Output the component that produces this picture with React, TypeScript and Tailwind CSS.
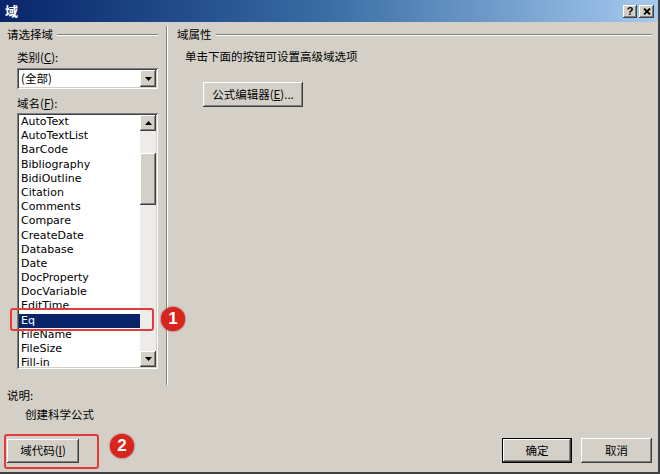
import React from 'react';

const raised =
  'bg-[#d4d0c8] shadow-[inset_-1px_-1px_#404040,inset_1px_1px_#ffffff,inset_-2px_-2px_#808080,inset_2px_2px_#d4d0c8]';
const sunken =
  'shadow-[inset_1px_1px_#808080,inset_-1px_-1px_#ffffff,inset_2px_2px_#404040,inset_-2px_-2px_#d4d0c8]';

const fields = [
  'AutoText',
  'AutoTextList',
  'BarCode',
  'Bibliography',
  'BidiOutline',
  'Citation',
  'Comments',
  'Compare',
  'CreateDate',
  'Database',
  'Date',
  'DocProperty',
  'DocVariable',
  'EditTime',
  'Eq',
  'FileName',
  'FileSize',
  'Fill-in',
];

function Arrow({ up }: { up?: boolean }) {
  return (
    <svg width="7" height="4" viewBox="0 0 7 4">
      <path d={up ? 'M3.5 0 L7 4 L0 4 Z' : 'M0 0 L7 0 L3.5 4 Z'} fill="#000" />
    </svg>
  );
}

function GroupTitle({ label }: { label: string }) {
  return (
    <div className="flex items-center h-[14px]">
      <span>{label}</span>
      <div className="flex-1 ml-[4px] h-[2px] border-t border-b border-t-[#808080] border-b-white" />
    </div>
  );
}

function Badge({ n, className }: { n: string; className: string }) {
  return (
    <div
      className={`absolute w-[24px] h-[24px] rounded-full bg-[#d8261e] text-white flex items-center justify-center font-bold text-[17px] font-['Liberation_Sans',sans-serif] shadow-[0_0_2px_#a01010] ${className}`}
    >
      {n}
    </div>
  );
}

export default function App() {
  return (
    <div className="relative w-[660px] h-[474px] bg-[#d4d0c8] overflow-hidden flex flex-col text-[11.5px] text-black font-['Noto_Sans_CJK_SC',sans-serif] border-r-2 border-b-2 border-r-[#404040] border-b-[#404040]">
      {/* title bar */}
      <div className="h-[22px] shrink-0 flex items-center pl-[5px] pr-[4px] bg-linear-to-r from-[#0a246a] via-[#3a6ea5] to-[#a6caf0]">
        <span className="text-white font-bold text-[13px]">域</span>
        <div className="ml-auto flex gap-[2px]">
          <div className={`w-[14px] h-[13px] flex items-center justify-center text-[11px] font-bold font-['Liberation_Sans',sans-serif] ${raised}`}>
            ?
          </div>
          <div className={`w-[15px] h-[13px] flex items-center justify-center ${raised}`}>
            <svg width="8" height="7" viewBox="0 0 8 7">
              <path d="M1 0.5 L7 6.5 M7 0.5 L1 6.5" stroke="#000" strokeWidth="1.8" />
            </svg>
          </div>
        </div>
      </div>

      {/* main */}
      <div className="flex h-[363px] shrink-0">
        <div className="w-[166px] pl-[7px] pr-[8px] pt-[6px] flex flex-col">
          <GroupTitle label="请选择域" />
          <div className="ml-[10px] mt-[8px] h-[14px] leading-[14px]">
            类别(<span className="underline">C</span>):
          </div>
          <div className={`ml-[10px] mt-[4px] w-[141px] h-[21px] bg-white flex items-center p-[2px] ${sunken}`}>
            <span className="pl-[2px] flex-1">(全部)</span>
            <div className={`w-[16px] h-[17px] flex items-center justify-center ${raised}`}>
              <Arrow />
            </div>
          </div>
          <div className="ml-[10px] mt-[7px] h-[14px] leading-[14px]">
            域名(<span className="underline">F</span>):
          </div>
          <div className={`ml-[10px] mt-[3px] w-[141px] h-[256px] bg-white flex p-[2px] ${sunken}`}>
            <div className="flex-1 flex flex-col font-['DejaVu_Sans',sans-serif] text-[11px]">
              {fields.map((f) => (
                <div
                  key={f}
                  className={`h-[14.2px] leading-[14.2px] pl-[2px] ${f === 'Eq' ? 'bg-[#0a246a] text-white' : ''}`}
                >
                  {f}
                </div>
              ))}
            </div>
            <div className="w-[16px] flex flex-col bg-[#eeece8]">
              <div className={`h-[16px] flex items-center justify-center ${raised}`}>
                <Arrow up />
              </div>
              <div className="h-[22px]" />
              <div className={`h-[52px] ${raised}`} />
              <div className="flex-1" />
              <div className={`h-[16px] flex items-center justify-center ${raised}`}>
                <Arrow />
              </div>
            </div>
          </div>
        </div>

        <div className="w-[2px] mt-[4px] border-l border-r border-l-[#808080] border-r-white" />

        <div className="flex-1 pl-[9px] pr-[6px] pt-[6px] flex flex-col items-start">
          <div className="w-full">
            <GroupTitle label="域属性" />
          </div>
          <div className="ml-[8px] mt-[7px] h-[14px] leading-[14px]">单击下面的按钮可设置高级域选项</div>
          <div className={`ml-[26px] mt-[19px] w-[100px] h-[25px] flex items-center justify-center ${raised}`}>
            公式编辑器(<span className="underline">E</span>)...
          </div>
        </div>
      </div>

      {/* description */}
      <div className="pl-[7px] pt-[3px] h-[14px] leading-[14px] box-content">说明:</div>
      <div className="pl-[25px] mt-[5px] h-[14px] leading-[14px]">创建科学公式</div>

      {/* bottom buttons */}
      <div className="mt-[17px] flex items-center px-[7px] pr-[6px]">
        <div className={`w-[72px] h-[24px] flex items-center justify-center ${raised}`}>
          域代码(<span className="underline">I</span>)
        </div>
        <div className="ml-auto flex gap-[9px]">
          <div className="w-[70px] h-[25px] border border-black">
            <div className={`w-full h-full flex items-center justify-center ${raised}`}>确定</div>
          </div>
          <div className={`w-[71px] h-[25px] flex items-center justify-center ${raised}`}>取消</div>
        </div>
      </div>

      {/* annotations */}
      <div className="absolute left-[10px] top-[308px] w-[144px] h-[23px] border-2 border-[#e23b3b] rounded-[3px]" />
      <Badge n="1" className="left-[161px] top-[307px]" />
      <div className="absolute left-[4px] top-[434px] w-[95px] h-[35px] border-2 border-[#e23b3b] rounded-[3px]" />
      <Badge n="2" className="left-[110px] top-[434px]" />
    </div>
  );
}
